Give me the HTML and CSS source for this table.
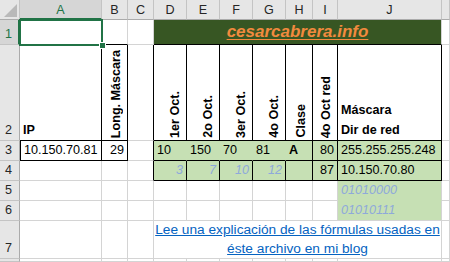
FILE: index.html
```html
<!DOCTYPE html>
<html lang="es">
<head>
<meta charset="utf-8">
<title>Calculadora de subredes</title>
<link rel="stylesheet" href="styles.css">
</head>
<body>
<div class="sheet">
  <!-- header row -->
  <div class="hd corner"><svg width="13" height="13" viewBox="0 0 13 13"><polygon points="13,0 13,13 0,13" fill="#b9b9b9"/></svg></div>
  <div class="hd sel">A</div>
  <div class="hd">B</div>
  <div class="hd">C</div>
  <div class="hd">D</div>
  <div class="hd">E</div>
  <div class="hd">F</div>
  <div class="hd">G</div>
  <div class="hd">H</div>
  <div class="hd">I</div>
  <div class="hd">J</div>
  <div class="hd"></div>

  <!-- row 1 -->
  <div class="rh rsel">1</div>
  <div class="c"></div>
  <div class="c kb"></div>
  <div class="c"></div>
  <div class="c title kb"><span>cesarcabrera.info</span></div>
  <div class="c"></div>

  <!-- row 2 -->
  <div class="rh">2</div>
  <div class="c kr kb b">IP</div>
  <div class="c rot kr kb"><span>Long. Máscara</span></div>
  <div class="c kr"></div>
  <div class="c rot kr kb"><span>1er Oct.</span></div>
  <div class="c rot kr kb"><span>2o Oct.</span></div>
  <div class="c rot kr kb"><span>3er Oct.</span></div>
  <div class="c rot kr kb"><span>4o Oct.</span></div>
  <div class="c rot kr kb"><span>Clase</span></div>
  <div class="c rot kr kb"><span>4o Oct red</span></div>
  <div class="c kr kb b head2">Máscara<br>Dir de red</div>
  <div class="c"></div>

  <!-- row 3 -->
  <div class="rh">3</div>
  <div class="c kl kr kb">10.150.70.81</div>
  <div class="c kr kb r">29</div>
  <div class="c kr"></div>
  <div class="c g gnr kb">10</div>
  <div class="c g gnr kb">150</div>
  <div class="c g gnr kb">70</div>
  <div class="c g gnr kb">81</div>
  <div class="c g kr kb b">A</div>
  <div class="c g kr kb r">80</div>
  <div class="c g kr kb">255.255.255.248</div>
  <div class="c"></div>

  <!-- row 4 -->
  <div class="rh">4</div>
  <div class="c"></div>
  <div class="c"></div>
  <div class="c kr"></div>
  <div class="c g kr kb r i">3</div>
  <div class="c g kr kb r i">7</div>
  <div class="c g kr kb r i">10</div>
  <div class="c g kr kb r i">12</div>
  <div class="c g kr kb"></div>
  <div class="c g kr kb r">87</div>
  <div class="c g kr kb">10.150.70.80</div>
  <div class="c"></div>

  <!-- row 5 -->
  <div class="rh">5</div>
  <div class="c"></div>
  <div class="c"></div>
  <div class="c"></div>
  <div class="c"></div>
  <div class="c"></div>
  <div class="c"></div>
  <div class="c"></div>
  <div class="c"></div>
  <div class="c"></div>
  <div class="c g gnb i">01010000</div>
  <div class="c"></div>

  <!-- row 6 -->
  <div class="rh">6</div>
  <div class="c"></div>
  <div class="c"></div>
  <div class="c"></div>
  <div class="c"></div>
  <div class="c"></div>
  <div class="c"></div>
  <div class="c"></div>
  <div class="c"></div>
  <div class="c"></div>
  <div class="c g i">01010111</div>
  <div class="c"></div>

  <!-- row 7 -->
  <div class="rh">7</div>
  <div class="c"></div>
  <div class="c"></div>
  <div class="c"></div>
  <div class="c link"><a href="#">Lee una explicación de las fórmulas usadas en<br>éste archivo en mi blog</a></div>
  <div class="c"></div>

  <!-- row 8 (partial) -->
  <div class="rh"></div>
  <div class="c"></div>
  <div class="c"></div>
  <div class="c"></div>
  <div class="c"></div>
  <div class="c"></div>
  <div class="c"></div>
  <div class="c"></div>
  <div class="c"></div>
  <div class="c"></div>
  <div class="c"></div>
  <div class="c"></div>

  <div class="selection"><div class="handle"></div></div>
</div>
</body>
</html>
```

FILE: styles.css
```css
html, body {
  margin: 0;
  padding: 0;
  background: #fff;
}

.sheet {
  position: relative;
  width: 450px;
  height: 262px;
  overflow: hidden;
  display: grid;
  grid-template-columns: 20px 82px 26px 26px 33px 33px 33px 33px 27px 25px 104px 8px;
  grid-template-rows: 20px 25px 96px 20px 20px 20px 20px 38px 3px;
  font-family: "Liberation Sans", Arial, sans-serif;
  font-size: 12.6px;
  color: #000;
}

/* column headers */
.hd {
  box-sizing: border-box;
  background: #e6e6e6;
  border-right: 1px solid #c4c4c4;
  border-bottom: 1px solid #ababab;
  display: flex;
  align-items: center;
  justify-content: center;
  color: #262626;
  font-size: 12.6px;
  padding-top: 1px;
}
.hd.sel {
  background: #d6d6d6;
  color: #217346;
  border-bottom: 2px solid #217346;
}
.corner {
  align-items: flex-end;
  justify-content: flex-end;
  padding: 0 2px 2px 0;
}
.corner svg {
  display: block;
}

/* row headers */
.rh {
  box-sizing: border-box;
  background: #e6e6e6;
  border-right: 1px solid #ababab;
  border-bottom: 1px solid #c4c4c4;
  display: flex;
  align-items: flex-end;
  justify-content: flex-start;
  padding: 0 0 1px 5px;
  line-height: 17px;
  color: #262626;
}
.rh.rsel {
  background: #d6d6d6;
  color: #217346;
  border-right: 2px solid #217346;
}

/* cells */
.c {
  box-sizing: border-box;
  border-right: 1px solid #d4d4d4;
  border-bottom: 1px solid #d4d4d4;
  display: flex;
  align-items: flex-end;
  justify-content: flex-start;
  padding: 0 3px 1px 3px;
  white-space: nowrap;
  line-height: 17px;
  overflow: visible;
}
.kr { border-right-color: #000; }
.kb { border-bottom-color: #000; }
.kl { border-left: 1px solid #000; }
.g { background: #c6e0b4; }
.gnr { border-right-color: #c6e0b4; }
.gnb { border-bottom-color: #c6e0b4; }
.r { justify-content: flex-end; }
.b { font-weight: bold; }
.i {
  font-style: italic;
  color: #8ea9db;
}

.rot {
  justify-content: flex-end;
  padding: 0 2px 2px 0;
}
.rot span {
  writing-mode: vertical-rl;
  transform: rotate(180deg);
  font-weight: bold;
  line-height: 17px;
}

.head2 {
  line-height: 20px;
  padding-bottom: 0;
}

.title {
  grid-column: span 7;
  background: #375623;
  justify-content: center;
  align-items: center;
  padding: 0 0 1px 0;
}
.title span {
  color: #f28a3e;
  font-size: 17px;
  font-weight: bold;
  font-style: italic;
  text-decoration: underline;
  text-decoration-thickness: 1px;
  text-underline-offset: 2px;
}

.link {
  grid-column: span 7;
  justify-content: center;
  align-items: flex-end;
  text-align: center;
  padding: 0 0 0 0;
  line-height: 19px;
  font-size: 13.7px;
}
.link a {
  color: #0563c1;
  text-decoration: underline;
}

/* active-cell selection overlay */
.selection {
  position: absolute;
  left: 19px;
  top: 19px;
  width: 84px;
  height: 27px;
  box-sizing: border-box;
  border: 2px solid #217346;
}
.handle {
  position: absolute;
  right: -5px;
  bottom: -5px;
  width: 5px;
  height: 5px;
  background: #217346;
  border: 1px solid #fff;
}
```
